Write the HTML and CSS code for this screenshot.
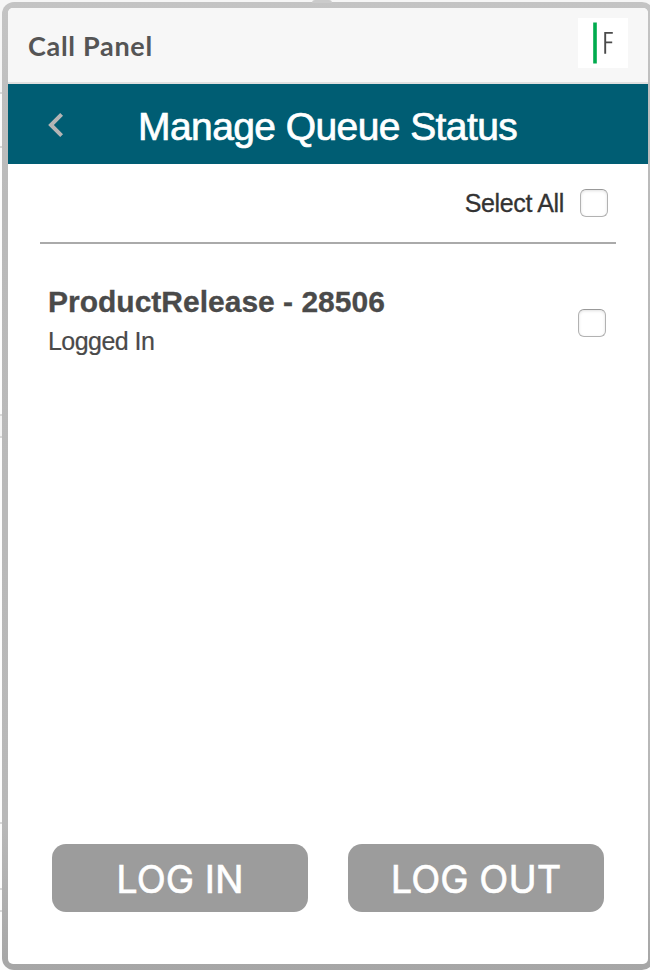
FILE: index.html
```html
<!DOCTYPE html>
<html lang="en">
<head>
<meta charset="utf-8">
<title>Call Panel</title>
<link rel="stylesheet" href="styles.css">
</head>
<body>
<div class="notch"></div>
<div class="frame">
  <main class="panel">
    <header class="header">
      <span class="header-title">Call Panel</span>
      <svg class="logo" viewBox="0 0 50 50" aria-hidden="true">
        <rect width="50" height="50" fill="#fff"/>
        <rect x="15.2" y="4.5" width="3.6" height="41" fill="#00ab4e"/>
        <path d="M34.8 14.9H27.2V35.8M27.2 24.4H34.2" fill="none" stroke="#4a4a4a" stroke-width="1.9"/>
      </svg>
    </header>
    <div class="bar">
      <svg class="back" viewBox="0 0 16 24" aria-hidden="true"><path d="M13.6 1.4L3 12L13.6 22.6" fill="none" stroke="#b4b4b4" stroke-width="4"/></svg>
      <h1 class="bar-title">Manage Queue Status</h1>
    </div>
    <label class="select-all"><span class="select-text">Select All</span><input class="check" type="checkbox"></label>
    <section class="queue">
      <div>
        <h2 class="queue-name">ProductRelease - 28506</h2>
        <p class="queue-state">Logged In</p>
      </div>
      <input class="check check-row" type="checkbox">
    </section>
    <footer class="actions">
      <button class="btn" type="button">LOG IN</button>
      <button class="btn" type="button">LOG OUT</button>
    </footer>
  </main>
</div>
</body>
</html>
```

FILE: styles.css
```css
* { box-sizing: border-box; }
html { height: 970px; overflow: hidden; }
body {
  margin: 0;
  padding: 2px 0 0 2px;
  width: 650px;
  height: 970px;
  overflow: hidden;
  position: relative;
  font-family: "Liberation Sans", Arial, sans-serif;
  background:
    linear-gradient(#d9d9d9, #d9d9d9) 0 92px / 3px 2px no-repeat,
    linear-gradient(#d9d9d9, #d9d9d9) 0 146px / 3px 2px no-repeat,
    linear-gradient(#d9d9d9, #d9d9d9) 0 414px / 3px 2px no-repeat,
    linear-gradient(#d9d9d9, #d9d9d9) 0 436px / 3px 2px no-repeat,
    linear-gradient(#d9d9d9, #d9d9d9) 0 822px / 3px 2px no-repeat,
    linear-gradient(#d9d9d9, #d9d9d9) 0 888px / 3px 2px no-repeat,
    linear-gradient(#d9d9d9, #d9d9d9) 0 910px / 3px 2px no-repeat,
    linear-gradient(#f6f6f6 92px, #fcfcfc 92px, #fcfcfc 414px, #f4f4f4 414px, #f4f4f4 436px, #fcfcfc 436px);
}
.notch {
  position: absolute;
  left: 312px;
  top: 0;
  width: 20px;
  height: 3px;
  background: #cbcbcb;
  border-radius: 3px 3px 0 0;
}
.frame {
  width: 652px;
  height: 968px;
  padding: 6px;
  border-radius: 12px;
  background: linear-gradient(#c4c4c4, #bababa 20%, #b8b8b8 85%, #a6a6a6);
}
.panel {
  display: flex;
  flex-direction: column;
  width: 640px;
  height: 956px;
  border-radius: 5px;
  overflow: hidden;
  background: #fff;
}
.header {
  display: flex;
  justify-content: space-between;
  align-items: center;
  height: 76px;
  padding: 0 20px;
  background: #f7f7f7;
  border-bottom: 2px solid #e0e0e0;
}
.header-title {
  font: 700 27px/32px Lato, sans-serif;
  letter-spacing: 0.7px;
  padding-top: 1px;
  color: #555;
}
.logo { width: 50px; height: 50px; margin-bottom: 4px; }
.bar {
  display: flex;
  align-items: center;
  height: 80px;
  padding-left: 40px;
  background: #005d73;
}
.back { width: 16px; height: 24px; margin-top: 2px; }
.bar-title {
  margin: 6px 0 0 74px;
  font-size: 39px;
  font-weight: 400;
  line-height: 46px;
  letter-spacing: -0.58px;
  white-space: nowrap;
  color: #fff;
  -webkit-text-stroke: 0.7px #fff;
}
.select-all {
  display: flex;
  justify-content: flex-end;
  align-items: center;
  height: 80px;
  margin: 0 32px;
  padding-right: 8px;
  border-bottom: 2px solid #aaa;
  color: #333;
  font-size: 25px;
}
.select-text {
  letter-spacing: -0.35px;
  -webkit-text-stroke: 0.3px #333;
}
.check {
  appearance: none;
  width: 28px;
  height: 28px;
  margin: 0 0 0 16px;
  flex: none;
  border: 1px solid #b2b2b2;
  border-top-color: #999;
  border-radius: 6px;
  background: #fff;
  box-shadow: inset 0 1px 3px rgba(0, 0, 0, 0.12);
}
.check-row { margin-top: 3px; }
.queue {
  display: flex;
  justify-content: space-between;
  align-items: center;
  margin: 38px 42px 0 40px;
}
.queue-name {
  margin: 0;
  font-size: 30px;
  line-height: 40px;
  color: #4a4a4a;
  -webkit-text-stroke: 0.3px #4a4a4a;
}
.queue-state {
  margin: 0;
  font-size: 25px;
  line-height: 39px;
  letter-spacing: -0.55px;
  color: #4a4a4a;
  -webkit-text-stroke: 0.2px #4a4a4a;
}
.actions {
  display: flex;
  gap: 40px;
  margin: auto 44px 52px;
}
.btn {
  width: 256px;
  height: 68px;
  padding: 1px 0 0;
  border: 0;
  border-radius: 14px;
  background: #9c9c9c;
  color: #fff;
  font: 400 38px/46px Inter, sans-serif;
  -webkit-text-stroke: 0.6px #fff;
}
```
